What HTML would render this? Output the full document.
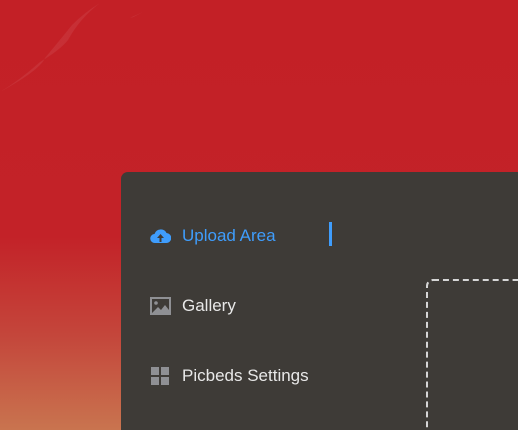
<!DOCTYPE html>
<html><head><meta charset="utf-8"><style>
html,body{margin:0;padding:0;width:518px;height:430px;overflow:hidden}
body{background:linear-gradient(180deg,#c32026 0%,#c32228 55%,#c4463b 78%,#c9744f 100%);position:relative;font-family:"Liberation Sans",Arial,sans-serif}
.panel{position:absolute;left:121px;top:172px;width:397px;height:258px;background:#3e3b37;border-radius:7px 0 0 0;overflow:hidden}
.item{position:absolute;left:29px;font-size:17px;color:#e8e8e8;display:flex;align-items:center}
.item svg{margin-right:11px}
.bar{position:absolute;left:208px;top:50px;width:3px;height:24px;background:#3f9dfc}
.dash{position:absolute;left:305px;top:107px;width:200px;height:180px;border:2px dashed #d6d6d6;border-radius:7px}
</style></head><body>
<svg width="200" height="120" style="position:absolute;left:0;top:0">
<path d="M0 92 Q40 70 45 58 Q60 40 72 25 Q85 12 100 3 Q80 18 68 40 Q60 50 40 62 Q20 80 0 92Z" fill="rgba(255,255,255,0.07)"/>
<path d="M130 18 L143 12 L133 17Z" fill="rgba(255,255,255,0.15)"/>
</svg>
<div class="panel">
  <div class="item" style="top:54px;color:#3f9dfc">
    <svg width="21" height="16" viewBox="0 0 21 16"><path d="M5 15 A4.5 4.5 0 0 1 4.5 6 A6.5 6.5 0 0 1 16.5 5 A5 5 0 0 1 16 15Z" fill="#3f9dfc"/><path d="M10.5 6 L7 10 H9.5 V14 H11.5 V10 H14Z" fill="#3e3b37"/></svg>
    Upload Area
  </div>
  <div class="bar"></div>
  <div class="item" style="top:124px">
    <svg width="21" height="18" viewBox="0 0 21 18"><rect x="0" y="0" width="21" height="18" fill="#8f9094"/><rect x="2" y="2" width="17" height="14" fill="#3e3b37"/><circle cx="6" cy="6" r="1.8" fill="#8f9094"/><path d="M2 16 L8 10 L11 13 L15 8 L19 13 V16Z" fill="#8f9094"/></svg>
    Gallery
  </div>
  <div class="item" style="top:194px">
    <svg width="21" height="19" viewBox="0 0 21 19"><rect x="1" y="0" width="8" height="8" fill="#8f9094"/><rect x="11" y="0" width="8" height="8" fill="#8f9094"/><rect x="1" y="10" width="8" height="8" fill="#8f9094"/><rect x="11" y="10" width="8" height="8" fill="#8f9094"/></svg>
    Picbeds Settings
  </div>
  <div class="dash"></div>
</div>
</body></html>
